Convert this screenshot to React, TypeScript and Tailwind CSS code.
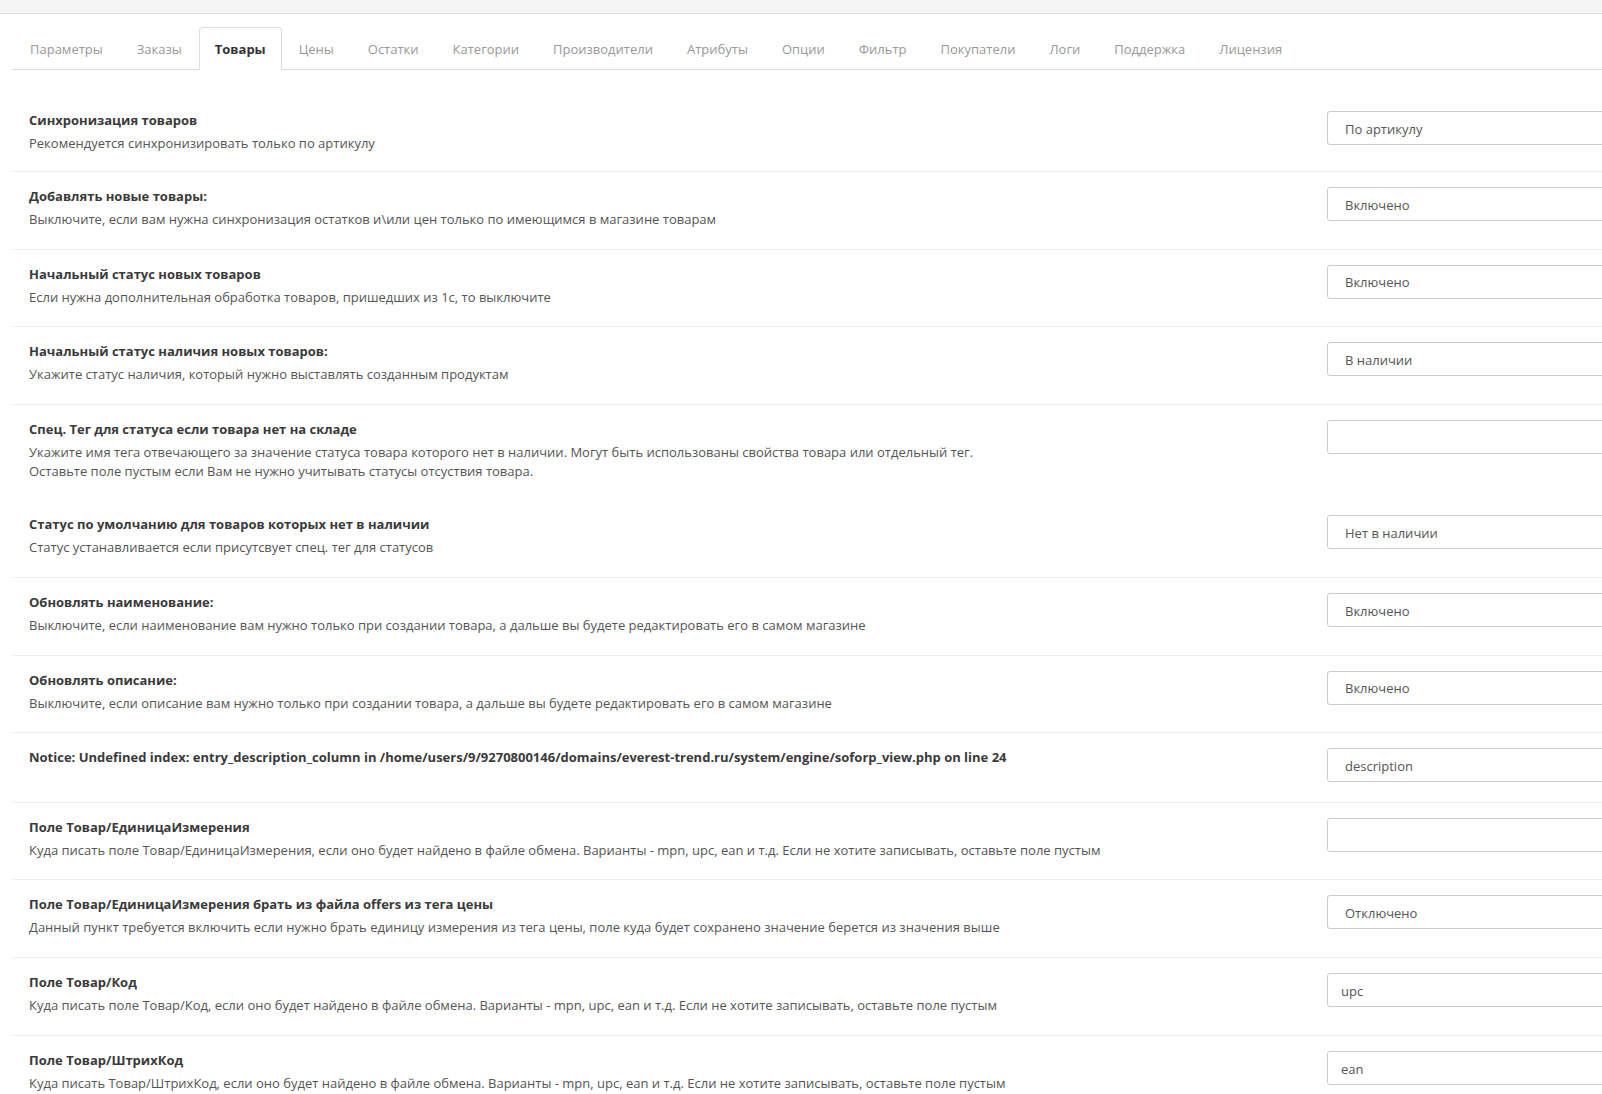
import React from "react";

type Row = {
  title: string;
  desc?: string[];
  kind: "select" | "input";
  value: string;
  noBorder?: boolean;
  first?: boolean;
};

const tabs = [
  "Параметры",
  "Заказы",
  "Товары",
  "Цены",
  "Остатки",
  "Категории",
  "Производители",
  "Атрибуты",
  "Опции",
  "Фильтр",
  "Покупатели",
  "Логи",
  "Поддержка",
  "Лицензия",
];

const rows: Row[] = [
  {
    title: "Синхронизация товаров",
    desc: ["Рекомендуется синхронизировать только по артикулу"],
    kind: "select",
    value: "По артикулу",
    first: true,
  },
  {
    title: "Добавлять новые товары:",
    desc: ["Выключите, если вам нужна синхронизация остатков и\\или цен только по имеющимся в магазине товарам"],
    kind: "select",
    value: "Включено",
  },
  {
    title: "Начальный статус новых товаров",
    desc: ["Если нужна дополнительная обработка товаров, пришедших из 1с, то выключите"],
    kind: "select",
    value: "Включено",
  },
  {
    title: "Начальный статус наличия новых товаров:",
    desc: ["Укажите статус наличия, который нужно выставлять созданным продуктам"],
    kind: "select",
    value: "В наличии",
  },
  {
    title: "Спец. Тег для статуса если товара нет на складе",
    desc: [
      "Укажите имя тега отвечающего за значение статуса товара которого нет в наличии. Могут быть использованы свойства товара или отдельный тег.",
      "Оставьте поле пустым если Вам не нужно учитывать статусы отсуствия товара.",
    ],
    kind: "input",
    value: "",
    noBorder: true,
  },
  {
    title: "Статус по умолчанию для товаров которых нет в наличии",
    desc: ["Статус устанавливается если присутсвует спец. тег для статусов"],
    kind: "select",
    value: "Нет в наличии",
  },
  {
    title: "Обновлять наименование:",
    desc: ["Выключите, если наименование вам нужно только при создании товара, а дальше вы будете редактировать его в самом магазине"],
    kind: "select",
    value: "Включено",
  },
  {
    title: "Обновлять описание:",
    desc: ["Выключите, если описание вам нужно только при создании товара, а дальше вы будете редактировать его в самом магазине"],
    kind: "select",
    value: "Включено",
  },
  {
    title:
      "Notice: Undefined index: entry_description_column in /home/users/9/9270800146/domains/everest-trend.ru/system/engine/soforp_view.php on line 24",
    kind: "select",
    value: "description",
  },
  {
    title: "Поле Товар/ЕдиницаИзмерения",
    desc: ["Куда писать поле Товар/ЕдиницаИзмерения, если оно будет найдено в файле обмена. Варианты - mpn, upc, ean и т.д. Если не хотите записывать, оставьте поле пустым"],
    kind: "input",
    value: "",
  },
  {
    title: "Поле Товар/ЕдиницаИзмерения брать из файла offers из тега цены",
    desc: ["Данный пункт требуется включить если нужно брать единицу измерения из тега цены, поле куда будет сохранено значение берется из значения выше"],
    kind: "select",
    value: "Отключено",
  },
  {
    title: "Поле Товар/Код",
    desc: ["Куда писать поле Товар/Код, если оно будет найдено в файле обмена. Варианты - mpn, upc, ean и т.д. Если не хотите записывать, оставьте поле пустым"],
    kind: "input",
    value: "upc",
  },
  {
    title: "Поле Товар/ШтрихКод",
    desc: ["Куда писать Товар/ШтрихКод, если оно будет найдено в файле обмена. Варианты - mpn, upc, ean и т.д. Если не хотите записывать, оставьте поле пустым"],
    kind: "input",
    value: "ean",
  },
];

function SettingRow({ row }: { row: Row }) {
  return (
    <div
      className={`flex pt-[15px] ${row.first ? "pb-[18px]" : "pb-[19.6px]"} ${
        row.noBorder ? "" : "border-b border-[#eeeeee]"
      }`}
    >
      <div className="flex-1 pl-[17px] pr-6">
        <div className="text-[13px] leading-[18px] font-bold text-[#3a3a3a]">{row.title}</div>
        {row.desc && (
          <div className="mt-[5px] text-[13px] leading-[19px] text-[#555]">
            {row.desc.map((d) => (
              <div key={d}>{d}</div>
            ))}
          </div>
        )}
      </div>
      <div className="w-[275px] shrink-0">
        {row.kind === "select" ? (
          <div className="w-[340px] h-[34px] border border-[#ccc] rounded-[3px] bg-white pl-[17px] pt-[3px] flex items-center text-[13px] text-[#555]">
            {row.value}
          </div>
        ) : (
          <input
            readOnly
            value={row.value}
            className="w-[340px] h-[34px] border border-[#ccc] rounded-[3px] bg-white pl-[13px] pt-[3px] text-[13px] text-[#555] outline-none"
          />
        )}
      </div>
    </div>
  );
}

export default function App() {
  return (
    <div className="min-h-screen bg-white overflow-hidden" style={{ fontFamily: '"Open Sans", Arial, sans-serif' }}>
      {/* top strip */}
      <div className="h-[14px] bg-[#f5f5f5] border-b border-[#e0e0e0]"></div>

      <div className="pl-[12px]">
        {/* Tabs */}
        <div className="mt-[13px] flex border-b border-[#dddddd] pl-[1px]">
          {tabs.map((t) => (
            <div
              key={t}
              className={
                t === "Товары"
                  ? "-mb-px px-[15px] pt-[11px] pb-[9px] leading-[20px] text-[13px] font-bold text-[#333] bg-white border border-[#dddddd] border-b-white rounded-t-[4px]"
                  : "px-[16px] pt-[11px] pb-[9px] leading-[20px] text-[13px] text-[#999] border border-transparent"
              }
            >
              {t}
            </div>
          ))}
        </div>

        {/* Settings */}
        <div className="mt-[26px]">
          {rows.map((r) => (
            <SettingRow key={r.title} row={r} />
          ))}
        </div>
      </div>
    </div>
  );
}
